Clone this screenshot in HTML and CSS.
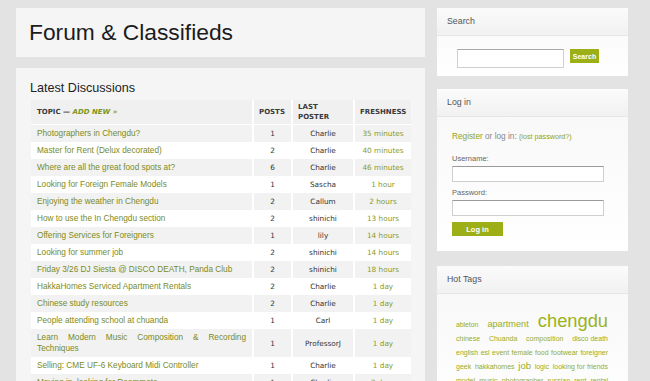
FILE: index.html
```html
<!DOCTYPE html>
<html lang="en">
<head>
<meta charset="utf-8">
<title>Forum &amp; Classifieds</title>
<link rel="stylesheet" href="styles.css">
</head>
<body>
<div class="page">
  <div class="main">
    <div class="panel header">
      <h1>Forum &amp; Classifieds</h1>
    </div>
    <div class="panel discussions">
      <h2>Latest Discussions</h2>
      <table class="topics">
        <colgroup>
          <col class="c-topic"><col class="c-posts"><col class="c-poster"><col class="c-fresh">
        </colgroup>
        <thead>
          <tr>
            <th class="th-topic">Topic &mdash; <a class="add">Add New &raquo;</a></th>
            <th>Posts</th>
            <th>Last<br>Poster</th>
            <th>Freshness</th>
          </tr>
        </thead>
        <tbody>
          <tr><td class="topic">Photographers in Chengdu?</td><td class="num">1</td><td class="num">Charlie</td><td class="num fresh">35 minutes</td></tr>
          <tr><td class="topic">Master for Rent (Delux decorated)</td><td class="num">2</td><td class="num">Charlie</td><td class="num fresh">40 minutes</td></tr>
          <tr><td class="topic">Where are all the great food spots at?</td><td class="num">6</td><td class="num">Charlie</td><td class="num fresh">46 minutes</td></tr>
          <tr><td class="topic">Looking for Foreign Female Models</td><td class="num">1</td><td class="num">Sascha</td><td class="num fresh">1 hour</td></tr>
          <tr><td class="topic">Enjoying the weather in Chengdu</td><td class="num">2</td><td class="num">Callum</td><td class="num fresh">2 hours</td></tr>
          <tr><td class="topic">How to use the In Chengdu section</td><td class="num">2</td><td class="num">shinichi</td><td class="num fresh">13 hours</td></tr>
          <tr><td class="topic">Offering Services for Foreigners</td><td class="num">1</td><td class="num">lily</td><td class="num fresh">14 hours</td></tr>
          <tr><td class="topic">Looking for summer job</td><td class="num">2</td><td class="num">shinichi</td><td class="num fresh">14 hours</td></tr>
          <tr><td class="topic">Friday 3/26 DJ Siesta @ DISCO DEATH, Panda Club</td><td class="num">2</td><td class="num">shinichi</td><td class="num fresh">18 hours</td></tr>
          <tr><td class="topic">HakkaHomes Serviced Apartment Rentals</td><td class="num">2</td><td class="num">Charlie</td><td class="num fresh">1 day</td></tr>
          <tr><td class="topic">Chinese study resources</td><td class="num">2</td><td class="num">Charlie</td><td class="num fresh">1 day</td></tr>
          <tr><td class="topic">People attending school at chuanda</td><td class="num">1</td><td class="num">Carl</td><td class="num fresh">1 day</td></tr>
          <tr><td class="topic">Learn Modern Music Composition &amp; Recording Techniques</td><td class="num">1</td><td class="num">ProfessorJ</td><td class="num fresh">1 day</td></tr>
          <tr><td class="topic">Selling: CME UF-6 Keyboard Midi Controller</td><td class="num">1</td><td class="num">Charlie</td><td class="num fresh">1 day</td></tr>
          <tr><td class="topic">Moving in, looking for Roommate</td><td class="num">1</td><td class="num">Charlie</td><td class="num fresh">2 days</td></tr>
          <tr><td class="topic">Chengdu nightlife guide</td><td class="num">3</td><td class="num">Callum</td><td class="num fresh">2 days</td></tr>
        </tbody>
      </table>
    </div>
  </div>

  <div class="sidebar">
    <div class="box box-search">
      <div class="box-title">Search</div>
      <div class="search-body">
        <input class="search-input" type="text">
        <button class="btn btn-search" type="button">Search</button>
      </div>
    </div>

    <div class="box box-login">
      <div class="box-title">Log in</div>
      <div class="login-body">
        <p class="reg"><a class="reg-link">Register</a> or log in: <a class="lost">(lost password?)</a></p>
        <label class="lbl lbl-user">Username:</label>
        <input class="field" type="text">
        <label class="lbl">Password:</label>
        <input class="field" type="password">
        <button class="btn btn-login" type="button">Log in</button>
      </div>
    </div>

    <div class="box box-tags">
      <div class="box-title">Hot Tags</div>
      <div class="tags">
        <a class="t t-xs">ableton</a> <a class="t t-m">apartment</a> <a class="t t-xl">chengdu</a>
        <a class="t">chinese</a> <a class="t">Chuanda</a> <a class="t">composition</a> <a class="t t-multi">disco death</a>
        <a class="t">english</a> <a class="t">esl</a> <a class="t">event</a> <a class="t">female</a> <a class="t">food</a> <a class="t">footwear</a> <a class="t">foreigner</a>
        <a class="t">geek</a> <a class="t">hakkahomes</a> <a class="t t-l">job</a> <a class="t">logic</a> <a class="t t-multi">looking for friends</a>
        <a class="t">model</a> <a class="t">music</a> <a class="t">photographer</a> <a class="t">russian</a> <a class="t">rent</a> <a class="t">rental</a>
        <a class="t">school</a> <a class="t">services</a> <a class="t">sichuan</a> <a class="t">study</a> <a class="t">summer</a> <a class="t">weather</a>
      </div>
    </div>
  </div>
</div>
</body>
</html>
```

FILE: styles.css
```css
html {
  overflow: hidden;
}

body {
  margin: 0;
  padding: 8px 0 0 16px;
  background: #e3e3e3;
  font-family: "Liberation Sans", Arial, sans-serif;
}

.page {
  display: flex;
  align-items: flex-start;
  gap: 12px;
}

/* ---------- main column ---------- */
.main {
  width: 409px;
}

.panel {
  background: #f5f5f5;
}

.header {
  height: 49px;
  display: flex;
  align-items: center;
  padding-left: 13px;
  margin-bottom: 11px;
}

.header h1 {
  margin: 0;
  font-size: 22.8px;
  line-height: 1;
  font-weight: normal;
  color: #1c1c1c;
}

.discussions {
  padding: 13px 14px 20px 15px;
}

.discussions h2 {
  margin: 0 0 4px -1px;
  font-size: 12.6px;
  line-height: 15px;
  font-weight: normal;
  color: #222;
}

.topics {
  width: 380px;
  table-layout: fixed;
  border-collapse: separate;
  border-spacing: 0;
}

.c-topic { width: 223px; }
.c-posts { width: 39px; }
.c-poster { width: 62px; }
.c-fresh { width: 56px; }

.topics th {
  background: #f0f0f0;
  border-bottom: 1px solid #fff;
  border-right: 2px solid #fff;
  padding: 2px 2px 2px 5px;
  text-align: left;
  vertical-align: middle;
  font-family: "DejaVu Sans", Verdana, sans-serif;
  font-size: 7px;
  line-height: 10px;
  font-weight: bold;
  text-transform: uppercase;
  color: #3a3a3a;
}

.topics th.th-topic {
  padding-left: 6px;
}

.topics th:last-child,
.topics td:last-child {
  border-right: 0;
}

.add {
  color: #7f951a;
  font-style: italic;
}

.topics td {
  border-right: 2px solid #fff;
  padding: 3px 6px;
  line-height: 11px;
  vertical-align: middle;
  background: #fff;
}

.topics tbody tr:nth-child(odd) td {
  background: #f2f2f2;
}

.topic {
  font-size: 8.25px;
  color: #7b8b1e;
  text-align: justify;
}

.num {
  font-family: "DejaVu Sans", Verdana, sans-serif;
  font-size: 7.3px;
  color: #333;
  text-align: center;
}

.fresh {
  color: #899b2a;
}

/* ---------- sidebar ---------- */
.sidebar {
  width: 191px;
}

.box {
  background: linear-gradient(#f7f7f7, #ffffff);
}

.box-search { margin-bottom: 13px; }
.box-login { margin-bottom: 15px; }

.box-title {
  height: 27px;
  line-height: 27px;
  padding-left: 10px;
  font-size: 8.8px;
  color: #555;
  background: linear-gradient(#fbfbfb, #f1f1f1);
  border-bottom: 1px solid #e6e6e6;
}

.search-body {
  display: flex;
  align-items: flex-start;
  gap: 6px;
  padding: 13px 0 8px 20px;
}

.search-input {
  display: block;
  box-sizing: border-box;
  width: 107px;
  height: 19px;
  margin: 0;
  padding: 0;
  background: #fff;
  border: 1px solid #cfcfcf;
  border-top-color: #a8a8a8;
}

.btn {
  display: block;
  margin: 0;
  padding: 0;
  border: 0;
  color: #fff;
  font-family: "Liberation Sans", Arial, sans-serif;
  font-weight: bold;
  background: #9caf16;
}

.btn-search {
  width: 29px;
  height: 14px;
  font-size: 7px;
}

.login-body {
  padding: 14px 0 15px 15px;
}

.reg {
  margin: 0;
  font-size: 8.25px;
  line-height: 12px;
  color: #888;
}

.reg-link {
  color: #8ea31d;
}

.lost {
  font-size: 7.2px;
  color: #8ea31d;
}

.lbl {
  display: block;
  margin-top: 6px;
  font-size: 7.5px;
  line-height: 10px;
  color: #666;
}

.lbl-user {
  margin-top: 11px;
}

.field {
  display: block;
  box-sizing: border-box;
  width: 152px;
  height: 16px;
  margin: 2px 0 0;
  padding: 0;
  background: #fff;
  border: 1px solid #cfcfcf;
  border-top-color: #9a9a9a;
}

.btn-login {
  width: 51px;
  height: 14px;
  margin-top: 6px;
  font-size: 7.5px;
}

.tags {
  padding: 24px 20px 30px 19px;
  font-size: 7px;
  line-height: 14px;
  text-align: justify;
  color: #98ad1e;
}

.t {
  line-height: 1px;
}

.t-multi {
  display: inline-block;
  white-space: nowrap;
}

.t-xs { font-size: 6.8px; }
.t-m { font-size: 9.2px; }
.t-l { font-size: 9.5px; }
.t-xl { font-size: 18.3px; color: #9bb31a; }
```
